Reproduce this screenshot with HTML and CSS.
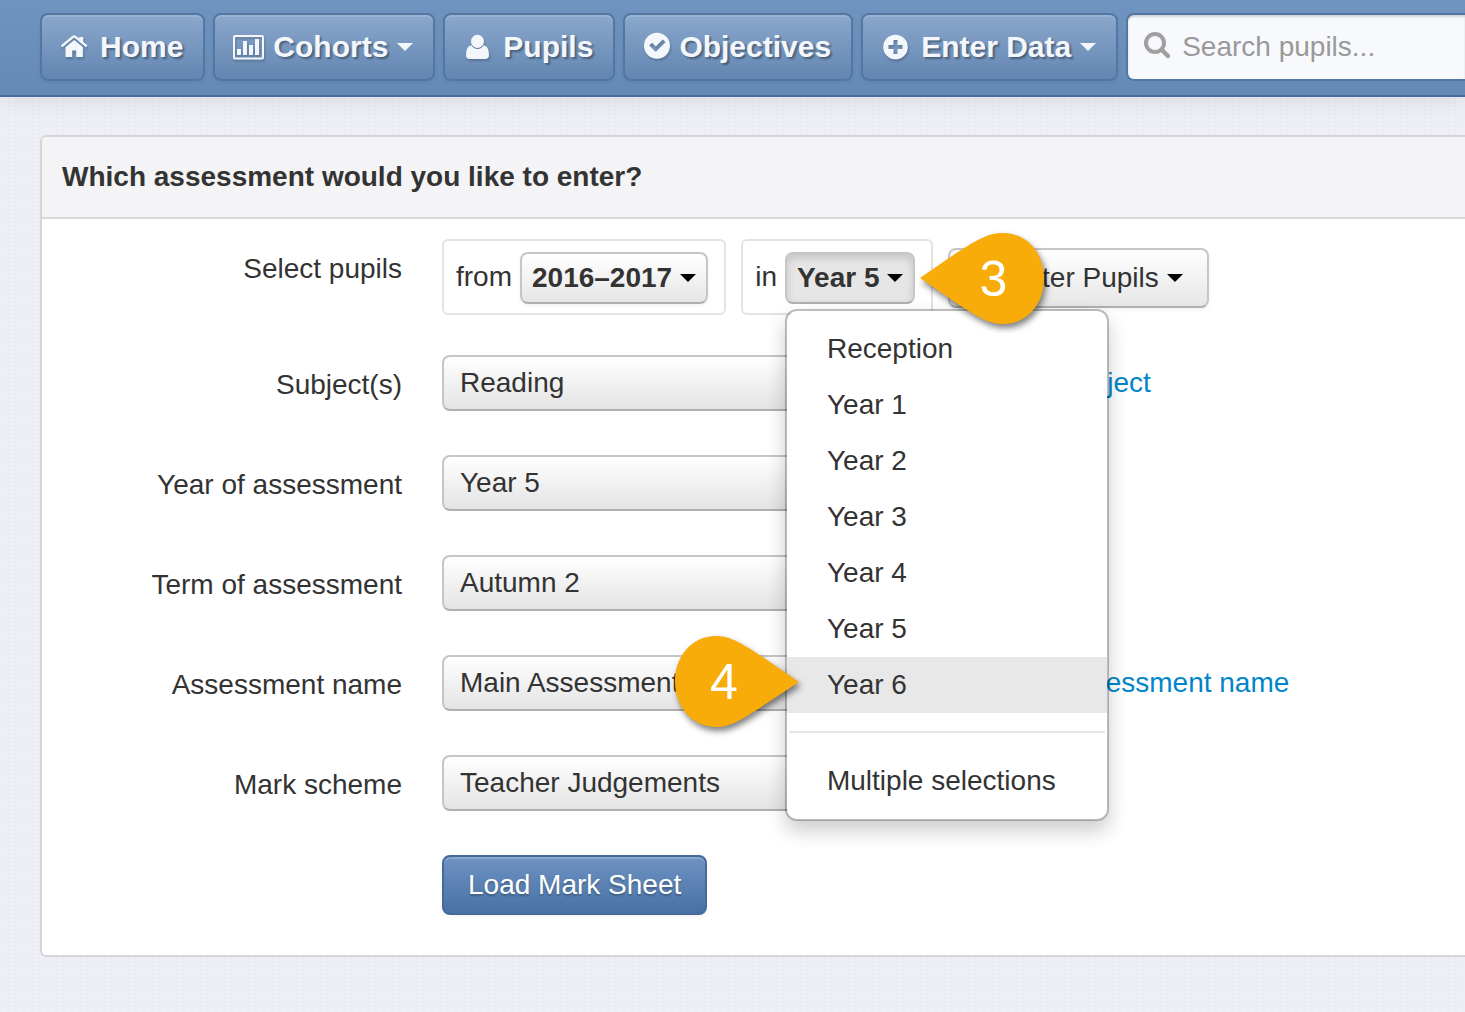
FILE: index.html
```html
<!DOCTYPE html>
<html lang="en">
<head>
    <meta charset="UTF-8">
    <meta name="viewport" content="width=device-width, initial-scale=1.0">
    <title>Enter Assessment</title>
    <link rel="stylesheet" href="styles.css">
</head>
<body>
    <header class="navbar">
        <nav class="nav">
            <a class="nav-item" href="#">
                <svg class="icon" viewBox="0 0 28 28" aria-hidden="true">
                    <path d="M17.200 4h4v7.500l-4-3.300z"/>
                    <path d="M3.500 14.200l8.700-7.300 8.700 7.300V24h-6.700v-6.500h-4V24H3.500z"/>
                    <path class="line" stroke-width="2.400" d="M-.4 13.400L11 3.900q1.200-1 2.400 0l11.400 9.500"/>
                </svg>
                Home
            </a>
            <a class="nav-item" href="#">
                <svg class="icon" viewBox="0 0 28 28" aria-hidden="true">
                    <rect class="line" stroke-width="2" x="-1" y="3" width="29" height="22.500" rx="1"/>
                    <path d="M2 16h4v6H2zM8 8h4v14H8zM14 12h4v10h-4zM20 6h4v16h-4z"/>
                </svg>
                Cohorts
                <span class="caret"></span>
            </a>
            <a class="nav-item" href="#">
                <svg class="icon" viewBox="0 0 28 28" aria-hidden="true">
                    <ellipse cx="12.500" cy="8.300" rx="6.500" ry="6.600"/>
                    <path d="M6.200 12.300Q1 13.300 1 22.200q0 3.800 4 3.800h15q4 0 4-3.800Q24 13.300 18.800 12.300Q16.500 15.900 12.500 15.900T6.200 12.300z"/>
                </svg>
                Pupils
            </a>
            <a class="nav-item tight" href="#">
                <svg class="icon" viewBox="0 0 28 28" aria-hidden="true">
                    <path fill-rule="evenodd" d="M12-.2a13 13 0 1 0 0 26a13 13 0 1 0 0-26zM4.300 12.600l2.800-2.800l3.700 3.700l7-7l2.800 2.800l-9.800 9.800z"/>
                </svg>
                Objectives
            </a>
            <a class="nav-item" href="#">
                <svg class="icon" viewBox="0 0 28 28" aria-hidden="true">
                    <path fill-rule="evenodd" d="M12.500 1.700a12.300 12.300 0 1 0 0 24.600a12.300 12.300 0 1 0 0-24.600zM10.500 7h4v5h5v4h-5v5h-4v-5h-5v-4h5z"/>
                </svg>
                Enter Data
                <span class="caret"></span>
            </a>
        </nav>
        <label class="search">
            <svg class="icon" viewBox="0 0 28 28" aria-hidden="true">
                <circle class="line" stroke-width="4" cx="11" cy="10" r="9"/>
                <path class="line" stroke-width="4.500" stroke-linecap="round" d="M18 17l6 6"/>
            </svg>
            <input type="text" placeholder="Search pupils..." aria-label="Search pupils">
        </label>
    </header>

    <main class="panel">
        <h1 class="panel-title">Which assessment would you like to enter?</h1>
        <form class="form">
            <div class="form-row">
                <span class="form-label" id="pupils-label">Select pupils</span>
                <div class="controls filters" role="group" aria-labelledby="pupils-label">
                    <div class="filter-box">
                        from
                        <button type="button" class="btn btn-small">2016–2017<span class="caret"></span></button>
                    </div>
                    <div class="filter-box">
                        in
                        <div class="dropdown">
                            <button type="button" class="btn btn-small active" aria-expanded="true">Year 5<span class="caret"></span></button>
                            <ul class="menu">
                                <li><a href="#">Reception</a></li>
                                <li><a href="#">Year 1</a></li>
                                <li><a href="#">Year 2</a></li>
                                <li><a href="#">Year 3</a></li>
                                <li><a href="#">Year 4</a></li>
                                <li><a href="#">Year 5</a></li>
                                <li class="selected">
                                    <a href="#">Year 6</a>
                                    <div class="callout callout-right">
                                        <svg viewBox="0 0 124 91" aria-hidden="true"><path d="M124 46L92 24C68 8 56 0 41 0C17 0 0 20 0 45.500S17 91 41 91C56 91 68 83 92 67z"/></svg>
                                        <span>4</span>
                                    </div>
                                </li>
                                <li class="divider" role="separator"></li>
                                <li><a href="#">Multiple selections</a></li>
                            </ul>
                            <div class="callout callout-left">
                                <svg viewBox="0 0 124 91" aria-hidden="true"><path d="M0 45L32 23C56 7 68 0 83 0C107 0 124 20 124 45.500S107 91 83 91C68 91 56 83 32 67z"/></svg>
                                <span>3</span>
                            </div>
                        </div>
                    </div>
                    <button type="button" class="btn">
                        <svg class="icon" viewBox="0 0 28 28" aria-hidden="true"><path d="M2 4h22l-8 10v11l-6-5v-6z"/></svg>
                        Filter Pupils<span class="caret"></span>
                    </button>
                </div>
            </div>
            <div class="form-row">
                <label class="form-label" for="subject">Subject(s)</label>
                <div class="controls">
                    <select id="subject"><option>Reading</option></select>
                    <a class="link" href="#">Add a new subject</a>
                </div>
            </div>
            <div class="form-row">
                <label class="form-label" for="year">Year of assessment</label>
                <div class="controls">
                    <select id="year"><option>Year 5</option></select>
                </div>
            </div>
            <div class="form-row">
                <label class="form-label" for="term">Term of assessment</label>
                <div class="controls">
                    <select id="term"><option>Autumn 2</option></select>
                </div>
            </div>
            <div class="form-row">
                <label class="form-label" for="name">Assessment name</label>
                <div class="controls">
                    <select id="name"><option>Main Assessment</option></select>
                    <a class="link" href="#">Add a new assessment name</a>
                </div>
            </div>
            <div class="form-row">
                <label class="form-label" for="scheme">Mark scheme</label>
                <div class="controls">
                    <select id="scheme"><option>Teacher Judgements</option></select>
                </div>
            </div>
            <div class="form-row">
                <span class="form-label"></span>
                <div class="controls">
                    <button type="submit" class="btn btn-primary">Load Mark Sheet</button>
                </div>
            </div>
        </form>
    </main>
</body>
</html>
```

FILE: styles.css
```css
* {
    box-sizing: border-box;
}

body {
    margin: 0;
    font-family: "Liberation Sans", Arial, sans-serif;
    font-size: 28px;
    line-height: 40px;
    color: #333;
    background-color: #eeeef7;
    /* light woven texture */
    background-image:
        radial-gradient(rgba(120, 120, 140, 0.04) 1px, transparent 1px),
        radial-gradient(rgba(255, 255, 255, 0.25) 1px, transparent 1px);
    background-size: 6px 4px, 8px 6px;
    overflow-x: hidden;
}

button, input, select {
    font: inherit;
    color: inherit;
}

a {
    text-decoration: none;
}

.icon {
    width: 28px;
    height: 28px;
    margin-right: 10px;
    flex-shrink: 0;
    overflow: visible;
    fill: currentColor;
}

.icon .line {
    fill: none;
    stroke: currentColor;
}

.caret {
    border-top: 8px solid;
    border-left: 8px solid transparent;
    border-right: 8px solid transparent;
    margin-left: 8px;
}

/* Top bar */
.navbar {
    display: flex;
    gap: 8px;
    padding: 13px 0 14px 40px;
    background: linear-gradient(#7094c0, #658ab6);
    border-bottom: 2px solid #456d9f;
    box-shadow: 0 2px 20px rgba(0, 0, 0, 0.1);
}

.nav {
    display: flex;
    gap: 8px;
}

.nav-item {
    display: flex;
    align-items: center;
    height: 68px;
    padding: 0 20px;
    border: 2px solid #5377a3;
    border-radius: 8px;
    background: linear-gradient(#8ba7cc, #6286b1);
    box-shadow: inset 0 2px 0 rgba(255, 255, 255, 0.15), 0 2px 4px rgba(0, 0, 0, 0.05);
    color: #f3f7fb;
    font-size: 30px;
    font-weight: bold;
    white-space: nowrap;
    text-shadow: 2px 2px 2px rgba(0, 0, 0, 0.35);
}

.nav-item .icon {
    filter: drop-shadow(1px 2px 1px rgba(0, 0, 0, 0.2));
}

.nav-item .caret {
    margin-left: 9px;
}

.nav-item.tight .icon {
    margin-right: 6px;
}

.search {
    display: flex;
    flex: 1;
    align-items: center;
    min-width: 0;
    height: 68px;
    padding-left: 16px;
    border: 2px solid #5377a3;
    border-right: 0;
    border-radius: 8px 0 0 8px;
    background: #f8f9fd;
    box-shadow: inset 0 2px 2px rgba(0, 0, 0, 0.15);
    color: #a0a0a0;
}

.search input {
    flex: 1;
    min-width: 0;
    padding: 0;
    border: 0;
    outline: 0;
    background: none;
}

.search input::placeholder {
    color: #999;
}

/* Panel */
.panel {
    margin: 38px 0 40px 40px;
    border: 2px solid #d5d5d8;
    border-right: 0;
    border-radius: 6px 0 0 6px;
    background: #fff;
}

.panel-title {
    margin: 0;
    padding: 20px;
    border-bottom: 2px solid #d8d8da;
    border-radius: 4px 0 0 0;
    background: #f4f4f6;
    font-size: 28px;
}

.form {
    display: flex;
    flex-direction: column;
    gap: 40px;
    padding: 20px 0 40px;
}

.form-row {
    display: flex;
    gap: 40px;
    min-height: 60px;
}

.form-label {
    width: 360px;
    padding-top: 10px;
    flex-shrink: 0;
    text-align: right;
}

.controls {
    display: flex;
    align-items: center;
    align-self: flex-start;
    gap: 20px;
    white-space: nowrap;
}

select {
    width: 460px;
    height: 56px;
    padding: 0 16px;
    border: 2px solid #c6c6c6;
    border-bottom-color: #b0b0b0;
    border-radius: 8px;
    background: linear-gradient(#fff, #e4e4e4);
    appearance: none;
}

.link {
    color: #0085cc;
}

/* Buttons */
.btn {
    display: flex;
    align-items: center;
    height: 60px;
    padding: 0 24px;
    border: 2px solid #c6c6c6;
    border-bottom-color: #b0b0b0;
    border-radius: 8px;
    background: linear-gradient(#fff, #e6e6e6);
    box-shadow: 0 2px 4px rgba(0, 0, 0, 0.05);
    white-space: nowrap;
}

.btn .caret {
    border-top-color: #000;
}

.btn-small {
    height: 52px;
    padding: 0 10px;
    font-weight: bold;
}

.btn.active {
    background: #e6e6e6;
    box-shadow: inset 0 4px 8px rgba(0, 0, 0, 0.15);
}

.btn-primary {
    border-color: #44699b;
    background: linear-gradient(#6e92c2, #4871a4);
    box-shadow: inset 0 2px 0 rgba(255, 255, 255, 0.2), 0 2px 4px rgba(0, 0, 0, 0.05);
    color: #fff;
    text-shadow: 0 2px 2px rgba(0, 0, 0, 0.25);
}

.filters {
    gap: 15px;
}

.filters .btn {
    margin-top: 2px;
}

.filter-box {
    display: flex;
    align-items: center;
    gap: 8px;
    height: 76px;
    padding: 0 16px 0 12px;
    border: 2px solid #e3e3e3;
    border-radius: 6px;
}

/* Year menu */
.dropdown {
    position: relative;
}

.menu {
    position: absolute;
    top: 100%;
    left: 0;
    z-index: 1;
    min-width: 324px;
    margin: 5px 0 0;
    padding: 10px 0;
    list-style: none;
    border: 2px solid rgba(0, 0, 0, 0.25);
    border-radius: 12px;
    background: #fff;
    background-clip: padding-box;
    box-shadow: 0 10px 20px rgba(0, 0, 0, 0.2);
}

.menu li {
    position: relative;
}

.menu a {
    display: block;
    padding: 8px 40px;
    color: #333;
}

.menu .selected {
    background: #e8e8e8;
}

.menu .divider {
    height: 2px;
    margin: 18px 2px 20px;
    background: #e5e5e5;
}

/* Numbered step pointers */
.callout {
    position: absolute;
    top: 50%;
    z-index: 2;
    display: flex;
    align-items: center;
    width: 124px;
    height: 91px;
    margin-top: -44px;
    color: #fff;
    font-size: 50px;
}

.callout svg {
    position: absolute;
    inset: 0;
    overflow: visible;
    fill: #f8ac0a;
    filter: drop-shadow(2px 4px 3px rgba(0, 0, 0, 0.5));
}

.callout span {
    position: relative;
}

.callout-left {
    left: 100%;
    margin-left: 5px;
    padding-left: 59px;
}

.callout-right {
    right: 100%;
    margin-top: -49px;
    margin-right: -12px;
    padding-left: 35px;
}
```
